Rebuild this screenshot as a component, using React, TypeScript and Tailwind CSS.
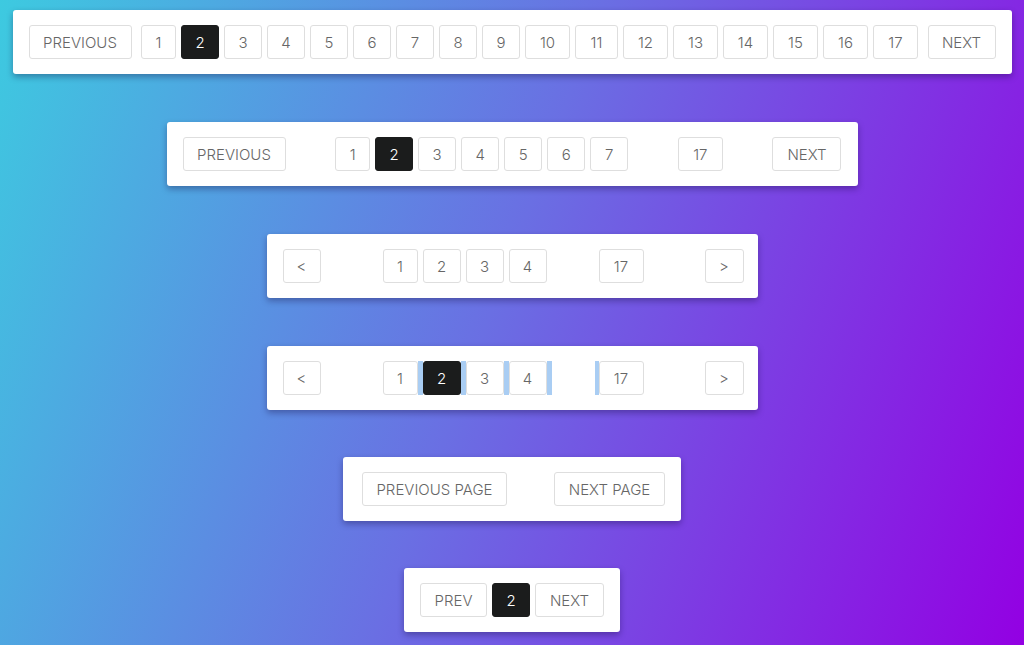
import React from 'react';

const font = { fontFamily: 'Inter, "Liberation Sans", sans-serif' };

// widths taken from the design, per label
const widthOf = (label: string) => {
  if (label === '1') return 'w-[35px]';
  if (label === '11') return 'w-[43px]';
  if (label.length === 1 && /\d/.test(label)) return 'w-[38px]';
  if (label.length === 2) return 'w-[45px]';
  return '';
};

const Btn: React.FC<{ label: string; active?: boolean; className?: string }> = ({ label, active, className = '' }) => (
  <button
    className={`h-[34px] ${widthOf(label)} shrink-0 whitespace-nowrap rounded-[3px] border text-[15px] font-light leading-none flex items-center justify-center ${
      active ? 'bg-[#1b1c1c] border-[#1b1c1c] text-white' : 'bg-white border-[#dedede] text-[#666]'
    } ${className}`}
  >
    {label}
  </button>
);

const Bar: React.FC = () => <span className="h-[34px] w-[5px] bg-[#a9cdf3]" />;

const Panel: React.FC<{ className?: string; children: React.ReactNode }> = ({ className = '', children }) => (
  <div className={`bg-white rounded-[3px] shadow-[0_3px_6px_rgba(20,10,60,0.35)] py-[15px] flex items-center ${className}`}>
    {children}
  </div>
);

const pages = Array.from({ length: 17 }, (_, i) => String(i + 1));

export default function App() {
  return (
    <div
      className="w-[1024px] h-[645px] overflow-hidden flex flex-col items-center gap-12 pt-[10px] bg-[linear-gradient(110deg,#3dcae0_0%,#6a6fe3_48%,#9300e3_100%)]"
      style={font}
    >
      {/* full list */}
      <Panel className="w-[999px] px-4 justify-between">
        <Btn label="PREVIOUS" className="w-[103px]" />
        <div className="flex gap-[5px]">
          {pages.map(p => (
            <Btn key={p} label={p} active={p === '2'} />
          ))}
        </div>
        <Btn label="NEXT" className="w-[68px]" />
      </Panel>

      {/* truncated */}
      <Panel className="w-[691px] px-4 justify-between">
        <Btn label="PREVIOUS" className="w-[103px]" />
        <div className="flex gap-[5px]">
          {pages.slice(0, 7).map(p => (
            <Btn key={p} label={p} active={p === '2'} />
          ))}
        </div>
        <Btn label="17" />
        <Btn label="NEXT" className="w-[69px]" />
      </Panel>

      {/* arrows */}
      <Panel className="w-[491px] px-4">
        <Btn label="<" className="w-[38px]" />
        <div className="flex gap-[5px] ml-[62px]">
          {['1', '2', '3', '4'].map(p => (
            <Btn key={p} label={p} />
          ))}
        </div>
        <Btn label="17" className="ml-[52px]" />
        <Btn label=">" className="w-[39px] ml-[61px]" />
      </Panel>

      {/* arrows, focused */}
      <Panel className="w-[491px] px-4">
        <Btn label="<" className="w-[38px]" />
        <div className="flex ml-[62px]">
          <Btn label="1" />
          <Bar />
          <Btn label="2" active />
          <Bar />
          <Btn label="3" />
          <Bar />
          <Btn label="4" />
          <Bar />
        </div>
        <span className="ml-[43px]">
          <Bar />
        </span>
        <div className="flex">
          <span className="h-[34px] w-[4px] bg-[#a9cdf3]" />
          <Btn label="17" />
        </div>
        <Btn label=">" className="w-[39px] ml-[61px]" />
      </Panel>

      {/* prev / next page */}
      <Panel className="w-[338px] pl-[19px] pr-4 justify-between -mt-px">
        <Btn label="PREVIOUS PAGE" className="w-[145px]" />
        <Btn label="NEXT PAGE" className="w-[111px]" />
      </Panel>

      {/* compact */}
      <Panel className="px-4 gap-[5px] -mt-px">
        <Btn label="PREV" className="w-[67px]" />
        <Btn label="2" active />
        <Btn label="NEXT" className="w-[69px]" />
      </Panel>
    </div>
  );
}
